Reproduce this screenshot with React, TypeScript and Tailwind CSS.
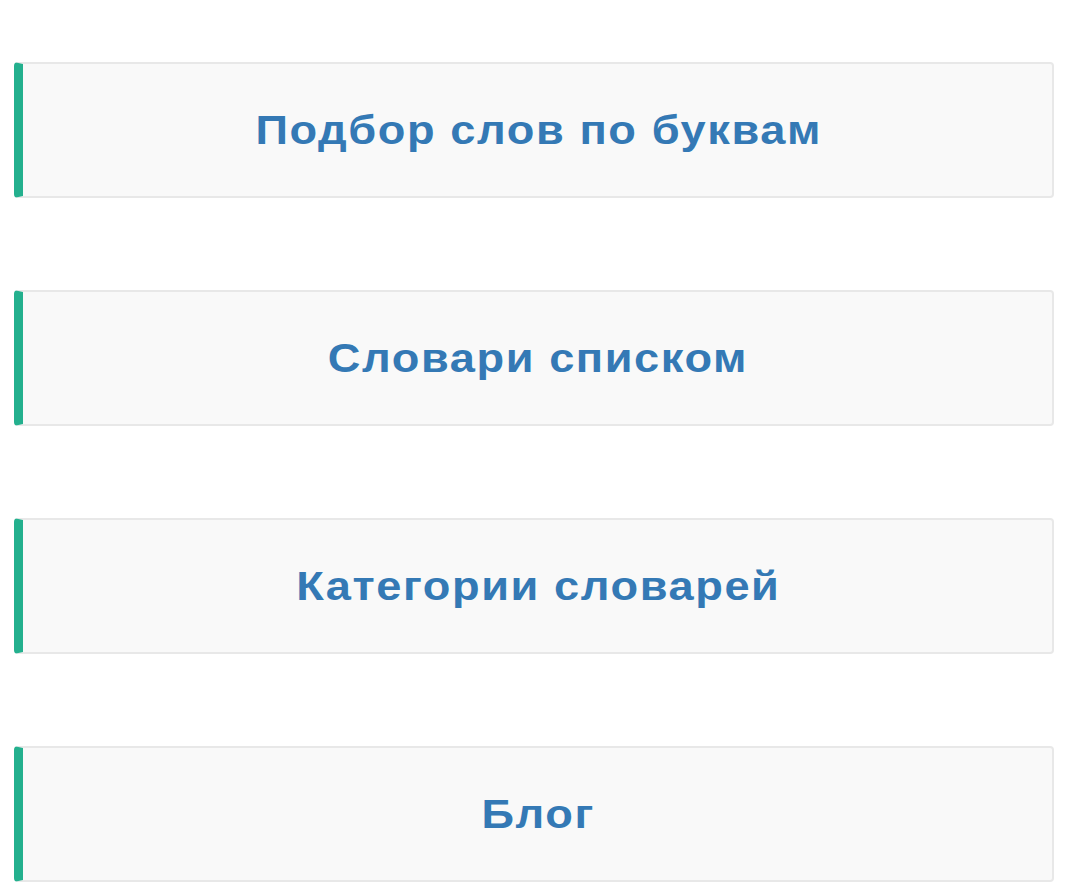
import React from "react";

const items = ["Подбор слов по буквам", "Словари списком", "Категории словарей", "Блог"];

export default function App() {
  return (
    <div className="min-h-[884px] bg-white pt-[62px] pl-[14px] pr-[21px]" style={{ fontFamily: '"Liberation Sans", Arial, sans-serif' }}>
      <div className="flex flex-col gap-[92px]">
        {items.map((t) => (
          <a
            key={t}
            href="#"
            className="flex h-[136px] items-center justify-center rounded-[4px] border-2 border-l-[9px] border-[#e8e8e8] border-l-[#24b08e] bg-[#f9f9f9] text-[40px] font-bold text-[#3479b5] no-underline"
          >
            <span className="mr-[-1.5px] inline-block scale-x-[1.13] whitespace-nowrap tracking-[1.4px]">{t}</span>
          </a>
        ))}
      </div>
    </div>
  );
}
